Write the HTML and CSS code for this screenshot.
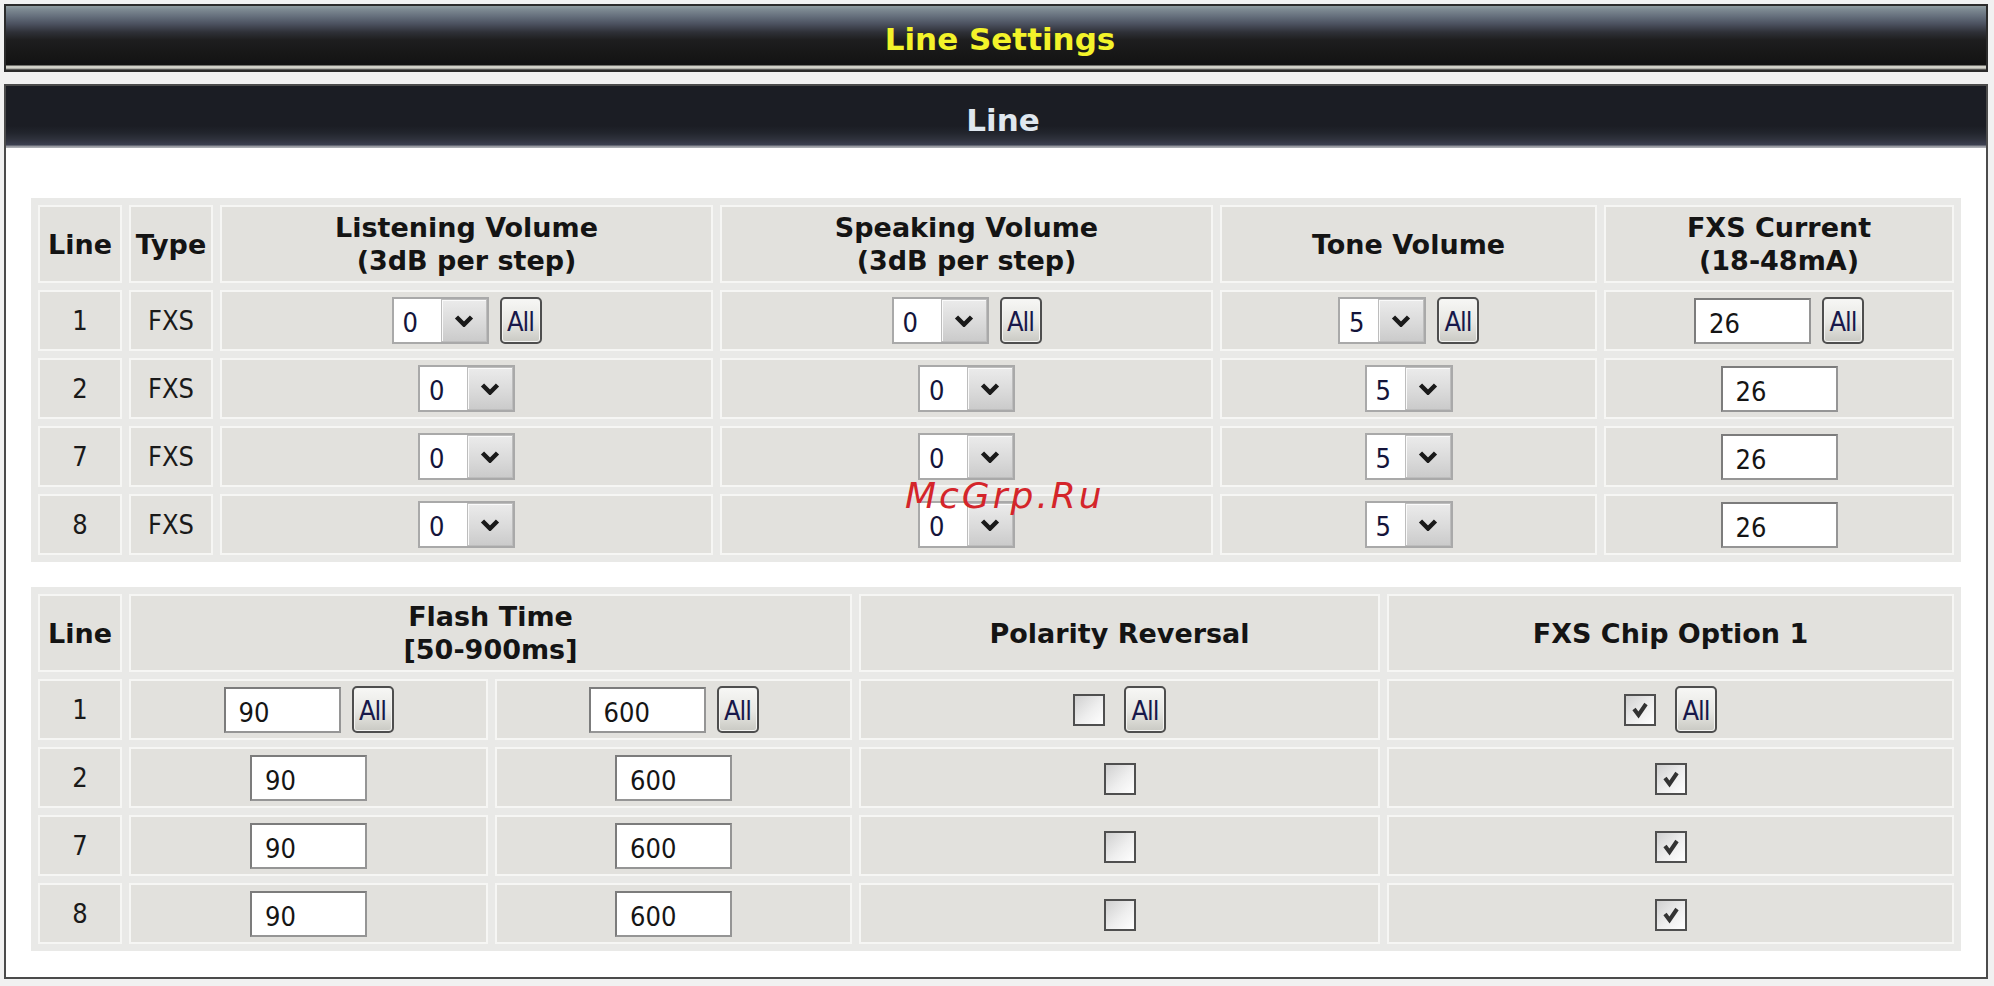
FILE: index.html
```html
<!DOCTYPE html>
<html lang="en">
<head>
<meta charset="utf-8">
<title>Line Settings</title>
<link rel="stylesheet" href="styles.css">
</head>
<body>
<div class="page">
  <div class="topbar"><span>Line Settings</span></div>
  <div class="panel">
    <div class="panel-head"><span>Line</span></div>
    <div class="panel-body">
      <table class="grid grid-a">
        <colgroup>
          <col class="w-line"><col class="w-type"><col class="w-vol"><col class="w-vol"><col class="w-tone"><col class="w-cur">
        </colgroup>
        <thead>
          <tr>
            <th>Line</th>
            <th>Type</th>
            <th>Listening Volume<br>(3dB per step)</th>
            <th>Speaking Volume<br>(3dB per step)</th>
            <th>Tone Volume</th>
            <th>FXS Current<br>(18-48mA)</th>
          </tr>
        </thead>
        <tbody>
          <tr>
            <td>1</td><td>FXS</td>
            <td><span class="ctl"><span class="sel"><span class="sel-val">0</span><span class="sel-btn"><svg viewBox="0 0 20 12"><polyline points="2.5,2 10,9.5 17.5,2"/></svg></span></span><button class="all" type="button">All</button></span></td>
            <td><span class="ctl"><span class="sel"><span class="sel-val">0</span><span class="sel-btn"><svg viewBox="0 0 20 12"><polyline points="2.5,2 10,9.5 17.5,2"/></svg></span></span><button class="all" type="button">All</button></span></td>
            <td><span class="ctl"><span class="sel sel-tone"><span class="sel-val">5</span><span class="sel-btn"><svg viewBox="0 0 20 12"><polyline points="2.5,2 10,9.5 17.5,2"/></svg></span></span><button class="all" type="button">All</button></span></td>
            <td><span class="ctl"><input class="txt" type="text" value="26"><button class="all" type="button">All</button></span></td>
          </tr>
          <tr>
            <td>2</td><td>FXS</td>
            <td><span class="sel"><span class="sel-val">0</span><span class="sel-btn"><svg viewBox="0 0 20 12"><polyline points="2.5,2 10,9.5 17.5,2"/></svg></span></span></td>
            <td><span class="sel"><span class="sel-val">0</span><span class="sel-btn"><svg viewBox="0 0 20 12"><polyline points="2.5,2 10,9.5 17.5,2"/></svg></span></span></td>
            <td><span class="sel sel-tone"><span class="sel-val">5</span><span class="sel-btn"><svg viewBox="0 0 20 12"><polyline points="2.5,2 10,9.5 17.5,2"/></svg></span></span></td>
            <td><input class="txt" type="text" value="26"></td>
          </tr>
          <tr>
            <td>7</td><td>FXS</td>
            <td><span class="sel"><span class="sel-val">0</span><span class="sel-btn"><svg viewBox="0 0 20 12"><polyline points="2.5,2 10,9.5 17.5,2"/></svg></span></span></td>
            <td><span class="sel"><span class="sel-val">0</span><span class="sel-btn"><svg viewBox="0 0 20 12"><polyline points="2.5,2 10,9.5 17.5,2"/></svg></span></span></td>
            <td><span class="sel sel-tone"><span class="sel-val">5</span><span class="sel-btn"><svg viewBox="0 0 20 12"><polyline points="2.5,2 10,9.5 17.5,2"/></svg></span></span></td>
            <td><input class="txt" type="text" value="26"></td>
          </tr>
          <tr>
            <td>8</td><td>FXS</td>
            <td><span class="sel"><span class="sel-val">0</span><span class="sel-btn"><svg viewBox="0 0 20 12"><polyline points="2.5,2 10,9.5 17.5,2"/></svg></span></span></td>
            <td><span class="sel"><span class="sel-val">0</span><span class="sel-btn"><svg viewBox="0 0 20 12"><polyline points="2.5,2 10,9.5 17.5,2"/></svg></span></span></td>
            <td><span class="sel sel-tone"><span class="sel-val">5</span><span class="sel-btn"><svg viewBox="0 0 20 12"><polyline points="2.5,2 10,9.5 17.5,2"/></svg></span></span></td>
            <td><input class="txt" type="text" value="26"></td>
          </tr>
        </tbody>
      </table>

      <table class="grid grid-b">
        <colgroup>
          <col class="w-line"><col class="w-f1"><col class="w-f2"><col class="w-pol"><col class="w-chip">
        </colgroup>
        <thead>
          <tr>
            <th>Line</th>
            <th colspan="2">Flash Time<br>[50-900ms]</th>
            <th>Polarity Reversal</th>
            <th>FXS Chip Option 1</th>
          </tr>
        </thead>
        <tbody>
          <tr>
            <td>1</td>
            <td><span class="ctl"><input class="txt" type="text" value="90"><button class="all" type="button">All</button></span></td>
            <td><span class="ctl"><input class="txt" type="text" value="600"><button class="all" type="button">All</button></span></td>
            <td><span class="ctl ctl-cb"><span class="cb"></span><button class="all" type="button">All</button></span></td>
            <td><span class="ctl ctl-cb"><span class="cb"><svg viewBox="0 0 28 28"><polyline points="8,13 12.5,19 20,8"/></svg></span><button class="all" type="button">All</button></span></td>
          </tr>
          <tr>
            <td>2</td>
            <td><input class="txt" type="text" value="90"></td>
            <td><input class="txt" type="text" value="600"></td>
            <td><span class="cb"></span></td>
            <td><span class="cb"><svg viewBox="0 0 28 28"><polyline points="8,13 12.5,19 20,8"/></svg></span></td>
          </tr>
          <tr>
            <td>7</td>
            <td><input class="txt" type="text" value="90"></td>
            <td><input class="txt" type="text" value="600"></td>
            <td><span class="cb"></span></td>
            <td><span class="cb"><svg viewBox="0 0 28 28"><polyline points="8,13 12.5,19 20,8"/></svg></span></td>
          </tr>
          <tr>
            <td>8</td>
            <td><input class="txt" type="text" value="90"></td>
            <td><input class="txt" type="text" value="600"></td>
            <td><span class="cb"></span></td>
            <td><span class="cb"><svg viewBox="0 0 28 28"><polyline points="8,13 12.5,19 20,8"/></svg></span></td>
          </tr>
        </tbody>
      </table>
    </div>
  </div>
  <div class="watermark">McGrp.Ru</div>
</div>
</body>
</html>
```

FILE: styles.css
```css
* { box-sizing: border-box; }

html, body {
  margin: 0;
  padding: 0;
}

body {
  background: #f1f1f1;
  font-family: "DejaVu Sans Condensed", "DejaVu Sans", sans-serif;
  color: #1a1a1a;
}

.page {
  position: relative;
  padding: 4px 6px 0 4px;
}

/* ---------- top title bar ---------- */
.topbar {
  height: 68px;
  border: 2px solid #2b2b2b;
  padding: 2px 0 0 8px;
  display: flex;
  align-items: center;
  justify-content: center;
  background: linear-gradient(to bottom,
    #919da1 0px, #7f8b93 3px, #66707d 10px, #4b515f 18px,
    #2f3138 26px, #1e1e1f 34px, #181818 46px, #131313 58px,
    #121212 59px, #cfcfc7 60px, #d3d3cb 62px, #8a8a86 63px, #2a2a2a 64px);
  font: bold 31px "DejaVu Sans", sans-serif;
  color: #f3f32a;
}

/* ---------- panel ---------- */
.panel {
  margin-top: 12px;
  border: 2px solid #4b4b4b;
  background: #ffffff;
}

.panel-head {
  height: 62px;
  padding: 5px 0 0 14px;
  display: flex;
  align-items: center;
  justify-content: center;
  background: linear-gradient(to bottom,
    #1b1d24 0px, #1b1d24 40px, #22252d 47px, #2e313b 53px,
    #3c4050 59px, #8e9098 60px, #b3b5bb 62px);
  font: bold 31px "DejaVu Sans", sans-serif;
  color: #dfe7ef;
}

.panel-body {
  padding: 50px 25px 26px;
}

/* ---------- tables ---------- */
.grid {
  width: 100%;
  table-layout: fixed;
  border-collapse: separate;
  border-spacing: 7px;
  background: #e9e9e7;
}

.grid + .grid { margin-top: 25px; }

.grid th,
.grid td {
  border: 2px solid #f6f6f4;
  background: #e2e1dd;
  padding: 0;
  text-align: center;
  vertical-align: middle;
}

.grid thead tr { height: 78px; }
.grid tbody tr { height: 61px; }

.grid th {
  font: bold 27px/33px "DejaVu Sans", sans-serif;
  color: #141414;
}

.grid td {
  font-size: 27px;
  line-height: 33px;
  color: #1a1a1a;
}

.w-line { width: 84px; }
.w-type { width: 84px; }
.w-vol  { width: 493px; }
.w-tone { width: 377px; }
.w-cur  { width: 350px; }
.w-f1   { width: 359px; }
.w-f2   { width: 357px; }
.w-pol  { width: 521px; }
.w-chip { width: 567px; }

/* ---------- controls ---------- */
.ctl {
  display: inline-flex;
  align-items: center;
  vertical-align: middle;
  gap: 11px;
}
.ctl-cb { gap: 19px; }

.sel {
  display: inline-flex;
  vertical-align: middle;
  width: 97px;
  height: 47px;
  border: 2px solid #a9a9a9;
  background: #ffffff;
}
.sel-tone { width: 88px; }

.sel-val {
  flex: 1;
  display: flex;
  align-items: center;
  padding: 3px 0 0 9px;
  font-size: 27px;
  color: #14143a;
}

.sel-btn {
  width: 46px;
  display: flex;
  align-items: center;
  justify-content: center;
  border: 1px solid #bdbdbd;
  background: linear-gradient(to bottom, #ebebeb, #d9d9d9 60%, #cbcbcb);
  box-shadow: inset 1px 1px 0 #fafafa;
}

.sel-btn svg {
  width: 20px;
  height: 12px;
}
.sel-btn polyline {
  fill: none;
  stroke: #1a1a1a;
  stroke-width: 4.5;
}

.txt {
  display: inline-block;
  vertical-align: middle;
  width: 117px;
  height: 46px;
  margin: 0;
  border: 2px solid #959595;
  border-top-color: #7c7c7c;
  border-left-color: #7c7c7c;
  padding: 6px 0 0 13px;
  background: #ffffff;
  font: 27px "DejaVu Sans Condensed", "DejaVu Sans", sans-serif;
  color: #151515;
  outline: none;
}

.all {
  width: 42px;
  height: 47px;
  margin: 0;
  padding: 2px 0 0;
  border: 2px solid #4e4e4e;
  border-radius: 5px;
  background: linear-gradient(to bottom, #f7f7f5, #e7e7e3 55%, #c9c9c3);
  box-shadow: inset 0 0 0 1px #f4f4f2;
  font: 27px/1 "DejaVu Sans Condensed", "DejaVu Sans", sans-serif;
  letter-spacing: -1px;
  color: #18184a;
  display: inline-flex;
  align-items: center;
  justify-content: center;
}

.cb {
  display: inline-flex;
  vertical-align: middle;
  align-items: center;
  justify-content: center;
  width: 32px;
  height: 32px;
  border: 2px solid #4f4f4f;
  background: linear-gradient(135deg, #d0d0d0 0%, #eeeeee 55%, #ffffff 100%);
}
.cb svg {
  width: 28px;
  height: 28px;
}
.cb polyline {
  fill: none;
  stroke: #333333;
  stroke-width: 4;
}

/* ---------- watermark ---------- */
.watermark {
  position: absolute;
  left: 905px;
  top: 475px;
  font: oblique 36px "DejaVu Sans", sans-serif;
  letter-spacing: 3px;
  color: #d4252a;
  pointer-events: none;
}
```
